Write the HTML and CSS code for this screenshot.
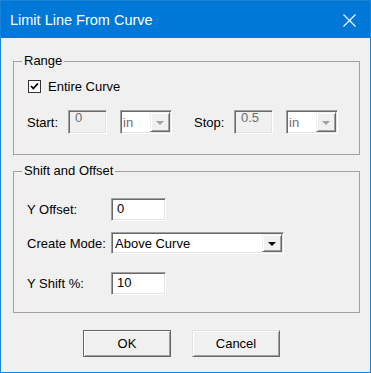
FILE: index.html
```html
<!DOCTYPE html>
<html lang="en">
<head>
    <meta charset="UTF-8">
    <title>Limit Line From Curve</title>
    <link rel="stylesheet" href="styles.css">
</head>
<body>

<div class="window">
    <div class="titlebar">
        <span class="title">Limit Line From Curve</span>
        <svg class="close" width="13" height="13" viewBox="0 0 13 13">
            <path d="M0.5 0.5 L12.5 12.5 M12.5 0.5 L0.5 12.5" stroke="#fff" stroke-width="1.1" fill="none"/>
        </svg>
    </div>

    <div class="content">
        <fieldset class="group range">
            <legend>Range</legend>
            <div class="check-row">
                <span class="checkbox">
                    <svg width="11" height="11" viewBox="0 0 11 11">
                        <path d="M2 5 L4.3 7.5 L9 2.5" stroke="#000" stroke-width="1.8" fill="none"/>
                    </svg>
                </span>
                <span>Entire Curve</span>
            </div>
            <div class="range-row">
                <span class="label range-label">Start:</span>
                <div class="edit disabled small">0</div>
                <div class="combo disabled short">
                    <span class="combo-text">in</span>
                    <span class="drop"><i class="arrow"></i></span>
                </div>
                <span class="label range-label stop">Stop:</span>
                <div class="edit disabled small">0.5</div>
                <div class="combo disabled short">
                    <span class="combo-text">in</span>
                    <span class="drop"><i class="arrow"></i></span>
                </div>
            </div>
        </fieldset>

        <fieldset class="group shift">
            <legend>Shift and Offset</legend>
            <div class="form-row first">
                <span class="label form-label">Y Offset:</span>
                <div class="edit">0</div>
            </div>
            <div class="form-row mode">
                <span class="label form-label">Create Mode:</span>
                <div class="combo wide">
                    <span class="combo-text">Above Curve</span>
                    <span class="drop"><i class="arrow"></i></span>
                </div>
            </div>
            <div class="form-row last">
                <span class="label form-label">Y Shift %:</span>
                <div class="edit">10</div>
            </div>
        </fieldset>

        <div class="buttons">
            <button class="btn default">OK</button>
            <button class="btn">Cancel</button>
        </div>
    </div>
</div>

</body>
</html>
```

FILE: styles.css
```css
body {
    margin: 0;
    background-color: #fff;
    font-family: 'Liberation Sans', Arial, sans-serif;
    font-size: 13px;
    color: #000;
}
.window {
    width: 371px;
    height: 373px;
    box-sizing: border-box;
    border: 1px solid #1883d7;
    background-color: #f0f0f0;
    display: flex;
    flex-direction: column;
}
.titlebar {
    height: 37px;
    background-color: #0078d7;
    display: flex;
    align-items: center;
    padding: 0 14px 0 9px;
}
.title {
    color: #fff;
    font-size: 14.5px;
    flex-grow: 1;
}
.close {
    display: block;
    margin-top: 1px;
}
.content {
    display: flex;
    flex-direction: column;
}

/* group boxes */
.group {
    margin: 16px 10px 0 12px;
    padding: 0 13px;
    border: 1px solid #a0a0a0;
    min-width: 0;
}
.group legend {
    margin-left: -5px;
    padding: 0 2px;
    line-height: 14px;
}
.range {
    padding-bottom: 20px;
}
.shift {
    margin-top: 9px;
    padding-bottom: 17px;
}

/* checkbox */
.check-row {
    display: flex;
    align-items: center;
    gap: 7px;
    height: 14px;
    margin-top: 11px;
    margin-left: 1px;
}
.checkbox {
    width: 11px;
    height: 11px;
    border: 1px solid #333;
    background-color: #fff;
    display: flex;
}

/* start / stop row */
.range-row {
    display: flex;
    align-items: center;
    height: 24px;
    margin-top: 17px;
}
.range-label {
    width: 41px;
}
.range-label.stop {
    width: 40px;
    margin-left: 22px;
}
.short {
    margin-left: 13px;
}

/* edit boxes */
.edit {
    box-sizing: border-box;
    width: 55px;
    height: 23px;
    padding-left: 5px;
    line-height: 19px;
    background-color: #fff;
    border: 1px solid;
    border-color: #a0a0a0 #fff #fff #a0a0a0;
    box-shadow: inset 1px 1px #696969, inset -1px -1px #e3e3e3;
}
.edit.small {
    width: 39px;
    height: 24px;
    line-height: 14px;
    padding-left: 6px;
}
.disabled {
    background-color: #f0f0f0;
    color: #6d6d6d;
}

/* combo boxes */
.combo {
    box-sizing: border-box;
    height: 24px;
    display: flex;
    align-items: center;
    border: 1px solid;
    border-color: #a0a0a0 #fff #fff #a0a0a0;
    box-shadow: inset 1px 1px #696969, inset -1px -1px #e3e3e3;
    background-color: #fff;
}
.combo.short {
    width: 52px;
}
.combo.wide {
    width: 173px;
    height: 22px;
}
.combo-text {
    flex-grow: 1;
    padding-left: 2px;
}
.wide .combo-text {
    padding-left: 3px;
}
.drop {
    box-sizing: border-box;
    width: 20px;
    align-self: stretch;
    margin: 1px 1px 1px 0;
    display: flex;
    justify-content: center;
    align-items: center;
    background-color: #f0f0f0;
    border: 1px solid;
    border-color: #f0f0f0 #696969 #696969 #f0f0f0;
    box-shadow: inset 1px 1px #fff, inset -1px -1px #a0a0a0;
}
.arrow {
    width: 0;
    height: 0;
    border-left: 4px solid transparent;
    border-right: 4px solid transparent;
    border-top: 4px solid #000;
    margin-top: 1px;
}
.disabled .arrow {
    border-top-color: #a0a0a0;
}

/* shift and offset rows */
.form-row {
    display: flex;
    align-items: center;
}
.form-row.first {
    margin-top: 20px;
}
.form-row.mode {
    margin-top: 11px;
}
.form-row.last {
    margin-top: 18px;
}
.form-label {
    width: 84px;
}

/* dialog buttons */
.buttons {
    display: flex;
    gap: 21px;
    padding-left: 82px;
    margin-top: 17px;
}
.btn {
    box-sizing: border-box;
    width: 88px;
    height: 27px;
    font-family: inherit;
    font-size: 13px;
    color: #000;
    background-color: #f0f0f0;
    border: 1px solid;
    border-color: #e3e3e3 #696969 #696969 #e3e3e3;
    box-shadow: inset 1px 1px #fff, inset -1px -1px #a0a0a0;
    padding: 0;
}
.btn.default {
    border-color: #646464;
}
```
